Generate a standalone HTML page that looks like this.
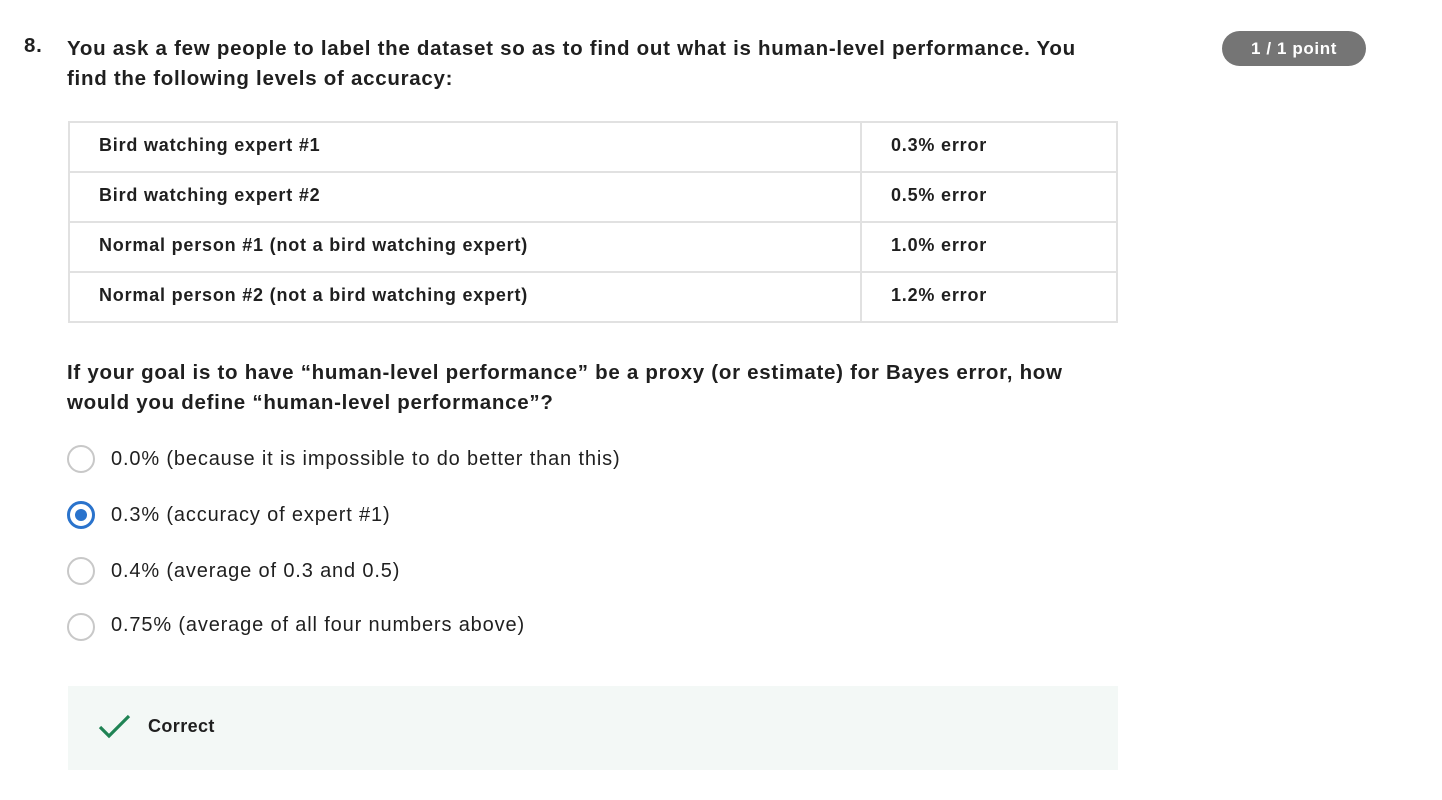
<!DOCTYPE html><html><head><style>
body{margin:0;background:#fff;font-family:"Liberation Sans",Arial,sans-serif;color:#1f1f1f;width:1442px;height:800px;position:relative;overflow:hidden}
.a{position:absolute;white-space:nowrap}
.h{font-weight:bold;font-size:20.5px;letter-spacing:0.72px}
table{position:absolute;left:68px;top:121px;width:1050px;border-collapse:collapse}
td{border:2px solid #e1e1e1;height:48px;box-sizing:border-box;font-weight:bold;font-size:18px;letter-spacing:0.8px;padding:0 0 3px 29px}
.r{position:absolute;left:67px;width:28px;height:28px;border:2px solid #c8c8c8;border-radius:50%;box-sizing:border-box}
.o{position:absolute;left:111px;font-size:20px;letter-spacing:0.85px;white-space:nowrap}
</style></head><body>
<div class="a h" style="left:24px;top:34px">8.</div>
<div class="a h" style="left:67px;top:34px;line-height:30px">You ask a few people to label the dataset so as to find out what is human-level performance. You<br>find the following levels of accuracy:</div>
<div class="a" style="left:1222px;top:31px;width:144px;height:35px;background:#757575;border-radius:18px;color:#fff;font-weight:bold;font-size:17px;letter-spacing:0.6px;text-align:center;line-height:35px">1 / 1 point</div>
<table>
<tr><td style="width:792px;height:50px">Bird watching expert #1</td><td>0.3% error</td></tr>
<tr><td style="height:50px">Bird watching expert #2</td><td>0.5% error</td></tr>
<tr><td style="height:50px">Normal person #1 (not a bird watching expert)</td><td>1.0% error</td></tr>
<tr><td style="height:50px">Normal person #2 (not a bird watching expert)</td><td>1.2% error</td></tr>
</table>
<div class="a h" style="left:67px;top:358px;line-height:30px">If your goal is to have “human-level performance” be a proxy (or estimate) for Bayes error, how<br>would you define “human-level performance”?</div>
<div class="r" style="top:445px"></div><div class="o" style="top:448px">0.0% (because it is impossible to do better than this)</div>
<div class="r" style="top:501px;border:3px solid #2a73cc"><div style="position:absolute;left:5px;top:5px;width:12px;height:12px;border-radius:50%;background:#2a73cc"></div></div><div class="o" style="top:504px">0.3% (accuracy of expert #1)</div>
<div class="r" style="top:557px"></div><div class="o" style="top:560px">0.4% (average of 0.3 and 0.5)</div>
<div class="r" style="top:613px"></div><div class="o" style="top:614px">0.75% (average of all four numbers above)</div>
<div class="a" style="left:68px;top:686px;width:1050px;height:84px;background:#f3f8f6"></div>
<svg class="a" style="left:98px;top:713px" width="34" height="26" viewBox="0 0 34 26"><path d="M2 14 L11 23 L31 3" fill="none" stroke="#1f8354" stroke-width="3.2"/></svg>
<div class="a" style="left:148px;top:716px;font-weight:bold;font-size:18px;letter-spacing:0.4px">Correct</div>
</body></html>
